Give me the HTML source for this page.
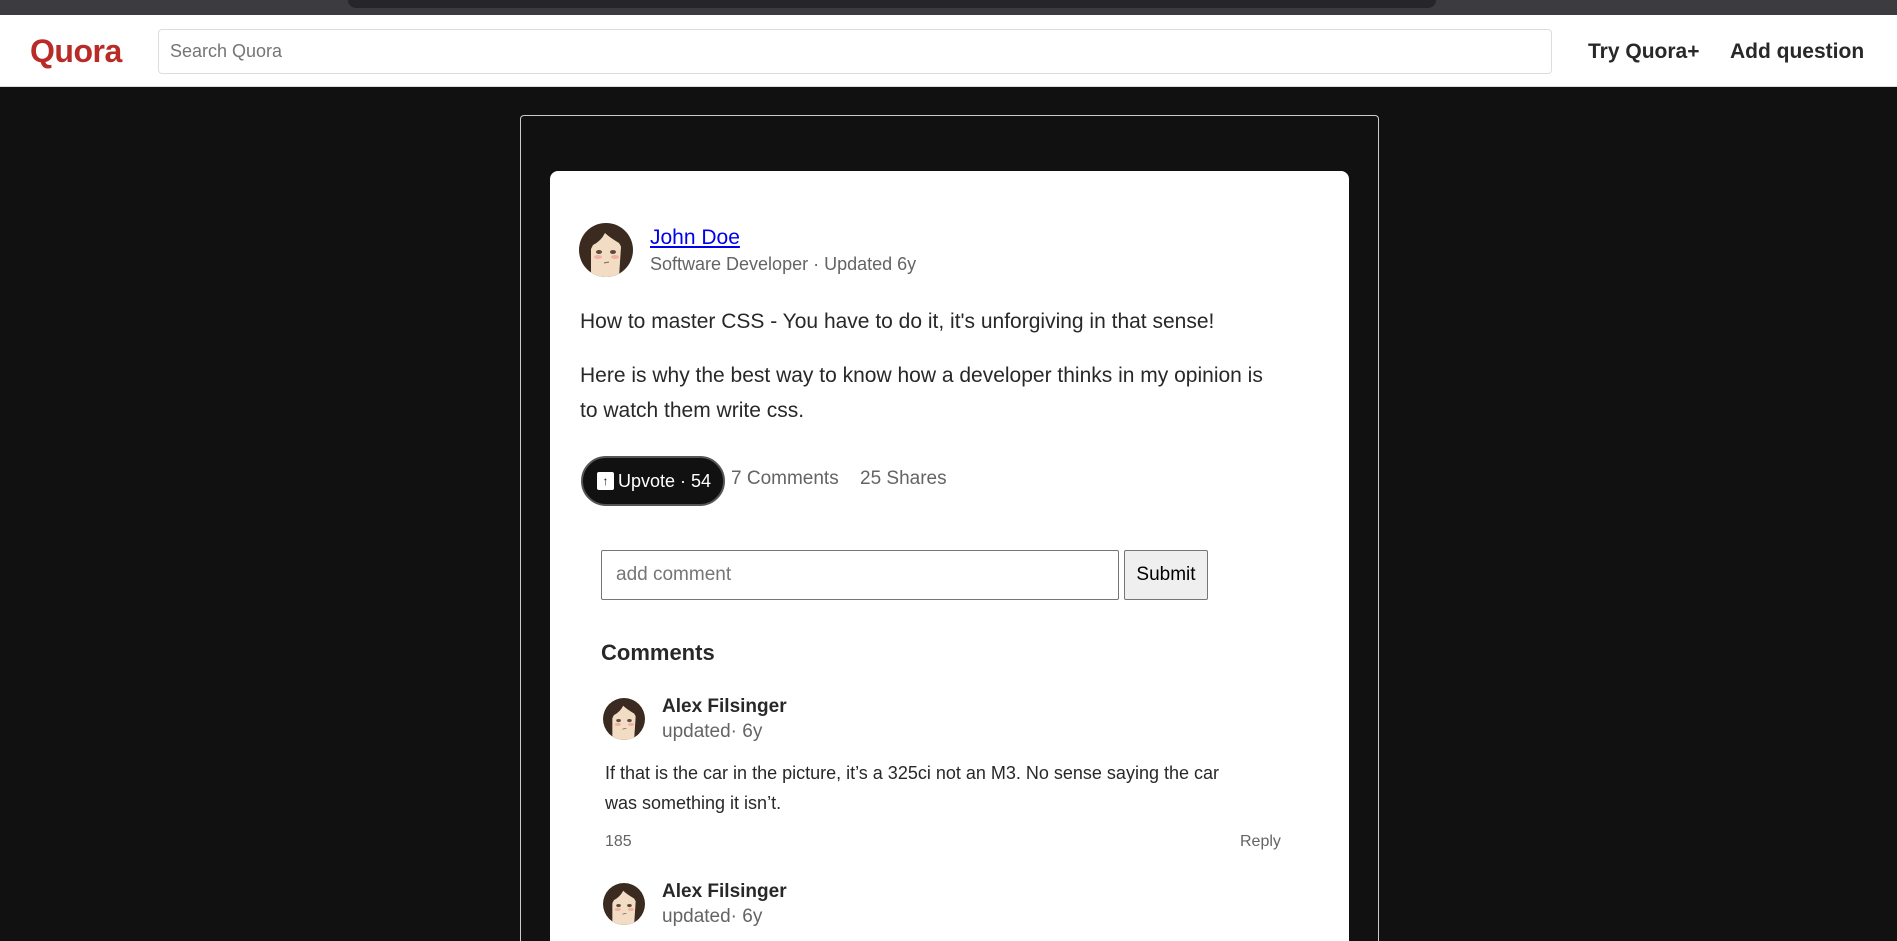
<!DOCTYPE html>
<html style="height:941px;overflow:hidden"><head><meta charset="utf-8"><style>
*{box-sizing:border-box;margin:0;padding:0}
body{width:1897px;height:941px;overflow:hidden;background:#111;font-family:"Liberation Sans",sans-serif;position:relative}
.a{position:absolute}
.top{left:0;top:0;width:1897px;height:15px;background:#3c3b40}
.tab{left:348px;top:0;width:1088px;height:8px;background:#26252a;border-radius:0 0 10px 10px}
.nav{left:0;top:15px;width:1897px;height:72px;background:#fff;border-bottom:1px solid #ddd}
.logo{left:30px;top:33px;font-size:32px;font-weight:bold;color:#b92b27;letter-spacing:-0.5px}
.search{left:158px;top:29px;width:1394px;height:45px;border:1px solid #ddd;border-radius:4px;padding:0 11px;line-height:43px;font-size:18px;color:#757575}
.nl{top:40px;font-size:21px;font-weight:bold;color:#282829}
.outer{left:520px;top:115px;width:859px;height:826px;border:1px solid #ccc;border-bottom:none;border-radius:4px 4px 0 0}
.card{left:550px;top:171px;width:799px;height:770px;background:#fff;border-radius:8px 8px 0 0}
.gray{color:#636466}
.up{left:581px;top:456px;width:144px;height:50px;background:#111;border:2px solid #555;border-radius:25px;color:#fff;font-size:18px;line-height:46px;padding-left:14px}
.ic{display:inline-block;width:17px;height:18px;background:#fff;border-radius:2px;color:#111;font-size:12px;line-height:18px;text-align:center;vertical-align:2px;margin-right:4px}
.inp{left:601px;top:550px;width:518px;height:50px;border:1px solid #767676;border-radius:2px;padding-left:14px;line-height:48px;font-size:19px;color:#757575}
.sub{left:1124px;top:550px;width:84px;height:50px;background:#efefef;border:1px solid #767676;border-radius:2px;text-align:center;line-height:48px;font-size:19px;color:#000}
</style></head><body>
<svg width="0" height="0" style="position:absolute"><defs>
<symbol id="av" viewBox="0 0 54 54"><clipPath id="c"><circle cx="27" cy="27" r="27"/></clipPath><g clip-path="url(#c)"><rect width="54" height="54" fill="#3a2a20"/><path d="M12 54 L12 24 Q14 10 27 8 Q40 10 42 24 L40 54Z" fill="#f3dcc4"/><path d="M10 30 Q12 6 30 6 Q46 8 46 30 L40 20 Q30 14 26 10 Q22 18 14 22Z" fill="#3a2a20"/><ellipse cx="20" cy="29" rx="3" ry="2" fill="#5a4a40"/><ellipse cx="34" cy="29" rx="3" ry="2" fill="#5a4a40"/><ellipse cx="19" cy="34" rx="4" ry="2" fill="#f2b0a0"/><ellipse cx="36" cy="34" rx="4" ry="2" fill="#f2b0a0"/><path d="M25 40 L30 39" stroke="#8a5a50" stroke-width="1"/></g></symbol></defs></svg>
<div class="a top"></div><div class="a tab"></div>
<div class="a nav"></div>
<div class="a logo">Quora</div>
<div class="a search">Search Quora</div>
<div class="a nl" style="left:1588px">Try Quora+</div>
<div class="a nl" style="left:1730px">Add question</div>
<div class="a outer"></div>
<div class="a card"></div>
<svg class="a" style="left:579px;top:223px" width="54" height="54"><use href="#av"/></svg>
<div class="a" style="left:650px;top:226px;font-size:21px;color:#00e;text-decoration:underline">John Doe</div>
<div class="a gray" style="left:650px;top:254px;font-size:18px">Software Developer · Updated 6y</div>
<div class="a" style="left:580px;top:310px;font-size:21px;color:#282829">How to master CSS - You have to do it, it's unforgiving in that sense!</div>
<div class="a" style="left:580px;top:358px;font-size:21px;line-height:35px;color:#282829;width:690px">Here is why the best way to know how a developer thinks in my opinion is to watch them write css.</div>
<div class="a up"><span class="ic">↑</span>Upvote · 54</div>
<div class="a gray" style="left:731px;top:468px;font-size:19px">7 Comments</div>
<div class="a gray" style="left:860px;top:468px;font-size:19px">25 Shares</div>
<div class="a inp">add comment</div>
<div class="a sub">Submit</div>
<div class="a" style="left:601px;top:640px;font-size:22px;font-weight:bold;color:#282829">Comments</div>
<svg class="a" style="left:603px;top:698px" width="42" height="42"><use href="#av"/></svg>
<div class="a" style="left:662px;top:696px;font-size:19px;font-weight:bold;color:#282829">Alex Filsinger</div>
<div class="a gray" style="left:662px;top:721px;font-size:19px">updated· 6y</div>
<div class="a" style="left:605px;top:758px;font-size:18px;line-height:30px;color:#282829;width:625px">If that is the car in the picture, it’s a 325ci not an M3. No sense saying the car was something it isn’t.</div>
<div class="a gray" style="left:605px;top:833px;font-size:16px">185</div>
<div class="a gray" style="left:1240px;top:833px;font-size:16px">Reply</div>
<svg class="a" style="left:603px;top:883px" width="42" height="42"><use href="#av"/></svg>
<div class="a" style="left:662px;top:881px;font-size:19px;font-weight:bold;color:#282829">Alex Filsinger</div>
<div class="a gray" style="left:662px;top:906px;font-size:19px">updated· 6y</div>
</body></html>
